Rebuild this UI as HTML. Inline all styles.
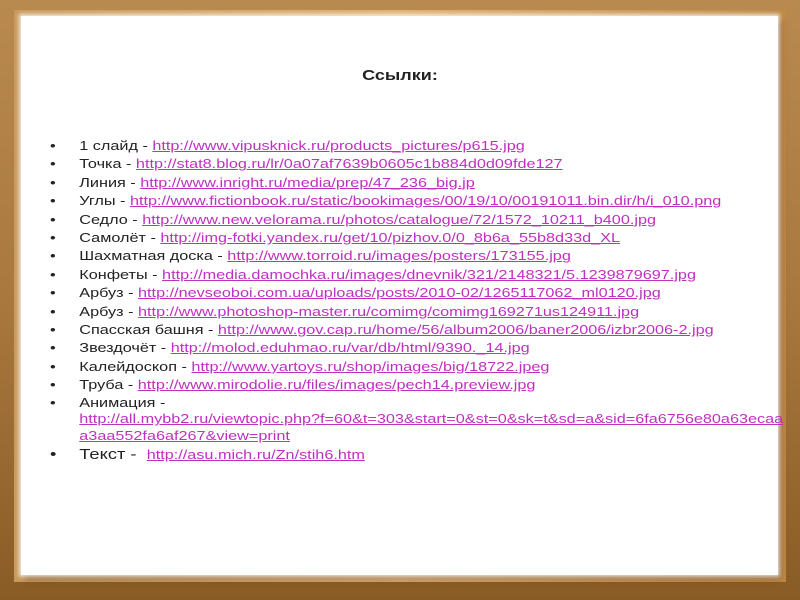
<!DOCTYPE html>
<html><head><meta charset="utf-8"><style>
body{margin:0;width:800px;height:600px;overflow:hidden;background:linear-gradient(180deg,#b98a4f,#a8783e 50%,#8a5c25);position:relative;font-family:"Liberation Sans",sans-serif}
.frame{position:absolute;left:14px;top:10px;width:772px;height:572px;background:linear-gradient(90deg,#c89a5a,#e0b070 50%,#c08a45);}
.w{position:absolute;left:21px;top:16px;width:757px;height:559px;background:#fff;box-shadow:0 0 4px 2px rgba(255,255,255,.8),3px 4px 6px rgba(60,30,0,.5)}
h1{position:absolute;left:0;width:800px;top:67px;margin:0;text-align:center;font-size:15px;font-weight:bold;color:#222;transform:scaleX(1.2)}
ul{position:absolute;left:50px;top:137px;margin:0;padding:0;list-style:none;font-size:13.3px;line-height:18.4px;color:#222;transform:scaleX(1.22);transform-origin:0 0}
li{position:relative;padding-left:24px;width:700px}
li:before{content:"•";position:absolute;left:0}
a{color:#c030c0;text-decoration:underline}
.li2{line-height:16.5px}
.big{font-size:15px;margin-top:2px}
.big a{font-size:13.3px}
</style></head><body>
<div class="frame"></div><div class="w"></div>
<h1>Ссылки:</h1>
<ul>
<li>1 слайд - <a>http://www.vipusknick.ru/products_pictures/p615.jpg</a></li>
<li>Точка - <a>http://stat8.blog.ru/lr/0a07af7639b0605c1b884d0d09fde127</a></li>
<li>Линия - <a>http://www.inright.ru/media/prep/47_236_big.jp</a></li>
<li>Углы - <a>http://www.fictionbook.ru/static/bookimages/00/19/10/00191011.bin.dir/h/i_010.png</a></li>
<li>Седло - <a>http://www.new.velorama.ru/photos/catalogue/72/1572_10211_b400.jpg</a></li>
<li>Самолёт - <a>http://img-fotki.yandex.ru/get/10/pizhov.0/0_8b6a_55b8d33d_XL</a></li>
<li>Шахматная доска - <a>http://www.torroid.ru/images/posters/173155.jpg</a></li>
<li>Конфеты - <a>http://media.damochka.ru/images/dnevnik/321/2148321/5.1239879697.jpg</a></li>
<li>Арбуз - <a>http://nevseoboi.com.ua/uploads/posts/2010-02/1265117062_ml0120.jpg</a></li>
<li>Арбуз - <a>http://www.photoshop-master.ru/comimg/comimg169271us124911.jpg</a></li>
<li>Спасская башня - <a>http://www.gov.cap.ru/home/56/album2006/baner2006/izbr2006-2.jpg</a></li>
<li>Звездочёт - <a>http://molod.eduhmao.ru/var/db/html/9390._14.jpg</a></li>
<li>Калейдоскоп - <a>http://www.yartoys.ru/shop/images/big/18722.jpeg</a></li>
<li>Труба - <a>http://www.mirodolie.ru/files/images/pech14.preview.jpg</a></li>
<li class="li2">Анимация -<br><a>http://all.mybb2.ru/viewtopic.php?f=60&amp;t=303&amp;start=0&amp;st=0&amp;sk=t&amp;sd=a&amp;sid=6fa6756e80a63ecaa<br>a3aa552fa6af267&amp;view=print</a></li>
<li class="big">Текст - &nbsp;<a>http://asu.mich.ru/Zn/stih6.htm</a></li>
</ul>
</body></html>
